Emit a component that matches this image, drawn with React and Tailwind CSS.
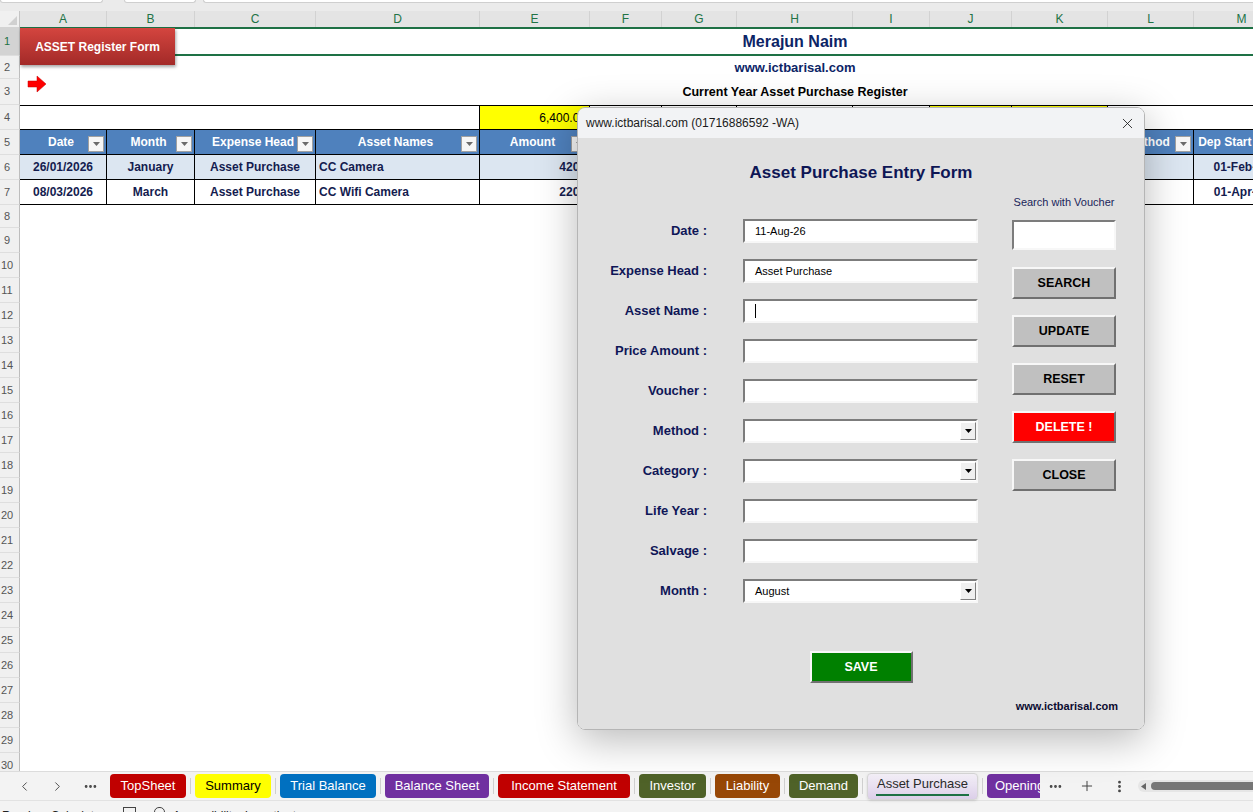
import { X, ChevronLeft, ChevronRight, Plus, Ellipsis, EllipsisVertical } from 'lucide-react';

const cols = [
    { k: 'A', w: 'w-[87px]' },
    { k: 'B', w: 'w-[88px]' },
    { k: 'C', w: 'w-[121px]' },
    { k: 'D', w: 'w-[164px]' },
    { k: 'E', w: 'w-[110px]' },
    { k: 'F', w: 'w-[72px]' },
    { k: 'G', w: 'w-[75px]' },
    { k: 'H', w: 'w-[116px]' },
    { k: 'I', w: 'w-[77px]' },
    { k: 'J', w: 'w-[82px]' },
    { k: 'K', w: 'w-[96px]' },
    { k: 'L', w: 'w-[86px]' },
    { k: 'M', w: 'w-[96px]' },
];

const headers = ['Date', 'Month', 'Expense Head', 'Asset Names', 'Amount', 'Voucher', 'Category', 'Life Year', 'Salvage', 'Dep/Year', 'Dep/Month', 'Method', 'Dep Start Date'];

const data = [
    { bg: 'bg-[#dce6f1]', cells: ['26/01/2026', 'January', 'Asset Purchase', 'CC Camera', '4200', '', '', '', '', '', '', '', '01-Feb-26'] },
    { bg: 'bg-white', cells: ['08/03/2026', 'March', 'Asset Purchase', 'CC Wifi Camera', '2200', '', '', '', '', '', '', '', '01-Apr-26'] },
];

const tabs = [
    { name: 'TopSheet', w: 'w-[76px]', cls: 'bg-[#c00000] text-white' },
    { name: 'Summary', w: 'w-[76px]', cls: 'bg-[#ffff00] text-black' },
    { name: 'Trial Balance', w: 'w-[96px]', cls: 'bg-[#0070c0] text-white' },
    { name: 'Balance Sheet', w: 'w-[104px]', cls: 'bg-[#7030a0] text-white' },
    { name: 'Income Statement', w: 'w-[132px]', cls: 'bg-[#c00000] text-white' },
    { name: 'Investor', w: 'w-[67px]', cls: 'bg-[#4f6228] text-white' },
    { name: 'Liability', w: 'w-[65px]', cls: 'bg-[#974706] text-white' },
    { name: 'Demand', w: 'w-[69px]', cls: 'bg-[#4f6228] text-white' },
];

const fields = [
    { label: 'Date :', value: '11-Aug-26' },
    { label: 'Expense Head :', value: 'Asset Purchase' },
    { label: 'Asset Name :', caret: true },
    { label: 'Price Amount :' },
    { label: 'Voucher :' },
    { label: 'Method :', combo: true },
    { label: 'Category :', combo: true },
    { label: 'Life Year :' },
    { label: 'Salvage :' },
    { label: 'Month :', combo: true, value: 'August' },
];

const sunken = 'border-2 border-t-[#7c7c7c] border-l-[#7c7c7c] border-b-[#f7f7f7] border-r-[#f7f7f7]';
const raised = 'border-2 border-t-[#f7f7f7] border-l-[#f7f7f7] border-b-[#707070] border-r-[#707070]';

const FilterBtn = () => (
    <span className="absolute right-[2px] bottom-[2px] flex h-[16px] w-[16px] items-center justify-center border border-[#a0a0a0] bg-[#f6f6f6]">
        <svg width="7" height="4" viewBox="0 0 7 4"><path d="M0 0h7L3.5 4z" fill="#6b6b6b" /></svg>
    </span>
);

const RowHead = ({ n, sel }) => (
    <div className={`flex w-[20px] shrink-0 items-center justify-center border-r border-b border-r-[#bdbdbd] border-b-[#dedede] pr-[5px] text-[11px] ${sel ? 'bg-[#d3d3d3] text-[#1e7145]' : 'bg-[#f0f0f0] text-[#555]'}`}>
        {n}
    </div>
);

const Button = ({ children, cls = 'bg-[#c0c0c0] text-black' }) => (
    <div className={`flex h-[32px] w-[104px] items-center justify-center text-[12.5px] font-bold ${raised} ${cls}`}>{children}</div>
);

const App = () => {
    const blank = Array.from({ length: 22 }, (_, i) => i + 9);

    return (
        <div className="relative h-[812px] w-[1253px] overflow-hidden bg-white font-['Liberation_Sans',Arial,sans-serif]">
            {/* formula bar remnant */}
            <div className="flex h-[11px] bg-[#ebebeb]">
                <div className="h-[3px] w-[103px] rounded-b-[4px] border-x border-b border-[#cfcfcf] bg-white" />
                <div className="ml-[21px] h-[3px] w-[72px] rounded-b-[4px] border-x border-b border-[#cfcfcf] bg-white" />
                <div className="ml-[7px] h-[3px] flex-1 rounded-bl-[4px] border-l border-b border-[#cfcfcf] bg-white" />
            </div>

            {/* column letters */}
            <div className="flex h-[16px] bg-[#e4e4e4]">
                <div className="relative w-[20px] shrink-0 border-r border-[#c4c4c4] bg-[#f0f0f0]">
                    <svg className="absolute right-[2px] bottom-[2px]" width="9" height="9" viewBox="0 0 9 9"><path d="M9 0v9H0z" fill="#d0d0d0" /></svg>
                </div>
                {cols.map(c => (
                    <div key={c.k} className={`${c.w} shrink-0 border-r border-[#d2d2d2] text-center text-[12px] leading-[16px] text-[#217346]`}>{c.k}</div>
                ))}
            </div>

            {/* sheet rows */}
            <div className="h-[744px] overflow-hidden text-[12px]">
                <div className="flex h-[29px]">
                    <RowHead n="1" sel />
                    <div className="flex w-[1550px] shrink-0 items-center justify-center border-y-2 border-[#1e7145] text-[16px] font-bold text-[#0c2466]">Merajun Naim</div>
                </div>
                <div className="flex h-[23px]">
                    <RowHead n="2" />
                    <div className="flex w-[1550px] shrink-0 items-center justify-center text-[13px] font-bold text-[#0c2466]">www.ictbarisal.com</div>
                </div>
                <div className="flex h-[26px]">
                    <RowHead n="3" />
                    <div className="flex w-[1550px] shrink-0 items-center justify-center text-[12.5px] font-bold text-black">Current Year Asset Purchase Register</div>
                </div>
                <div className="flex h-[25px]">
                    <RowHead n="4" />
                    <div className="flex flex-1 border-y border-black">
                        <div className="w-[460px] shrink-0 border-r border-black" />
                        <div className="flex w-[110px] shrink-0 items-center justify-end border-r border-black bg-[#ffff00] pr-[3px] text-black">6,400.00</div>
                        <div className="w-[72px] shrink-0 border-r border-black" />
                        <div className="w-[75px] shrink-0 border-r border-black" />
                        <div className="w-[116px] shrink-0 border-r border-black" />
                        <div className="w-[77px] shrink-0 border-r border-black" />
                        <div className="w-[82px] shrink-0 border-r border-black bg-[#ffff00]" />
                        <div className="w-[96px] shrink-0 border-r border-black bg-[#ffff00]" />
                        <div className="flex-1" />
                    </div>
                </div>
                <div className="flex h-[25px]">
                    <RowHead n="5" />
                    {cols.map((c, i) => (
                        <div key={c.k} className={`relative ${c.w} flex shrink-0 items-center justify-center border-r border-b border-black bg-[#4f81bd] pr-[4px] font-bold text-white`}>
                            <span className="whitespace-nowrap">{headers[i]}</span>
                            <FilterBtn />
                        </div>
                    ))}
                </div>
                {data.map((r, ri) => (
                    <div key={ri} className="flex h-[25px]">
                        <RowHead n={String(6 + ri)} />
                        {cols.map((c, i) => (
                            <div
                                key={c.k}
                                className={`${c.w} flex shrink-0 items-center whitespace-nowrap border-r border-b border-black px-[3px] font-bold text-[#141c4f] ${r.bg} ${i === 3 ? 'justify-start' : i === 4 ? 'justify-end' : 'justify-center'}`}
                            >
                                {r.cells[i]}
                            </div>
                        ))}
                    </div>
                ))}
                <div className="flex h-[23px]">
                    <RowHead n="8" />
                </div>
                {blank.map(n => (
                    <div key={n} className="flex h-[25px]">
                        <RowHead n={String(n)} />
                    </div>
                ))}
            </div>

            {/* sheet tabs */}
            <div className="flex h-[29px] items-center border-t border-[#dcdcdc] bg-[#f3f3f3] text-[13px]">
                <div className="flex w-[110px] shrink-0 items-center pl-[8px] text-[#444]">
                    <span className="flex w-[33px] justify-center"><ChevronLeft size={15} strokeWidth={1.5} /></span>
                    <span className="flex w-[33px] justify-center"><ChevronRight size={15} strokeWidth={1.5} /></span>
                    <span className="flex w-[33px] justify-center"><Ellipsis size={15} strokeWidth={2.5} /></span>
                </div>
                {tabs.map(t => (
                    <div key={t.name} className="flex items-center">
                        <div className={`${t.w} flex h-[24px] items-center justify-center rounded-[4px] ${t.cls}`}>{t.name}</div>
                        <div className="mx-[4px] h-[16px] w-[1px] bg-[#cfcfcf]" />
                    </div>
                ))}
                <div className="relative flex h-[27px] w-[111px] flex-col items-center justify-center rounded-[4px] border border-[#d6d6d6] bg-gradient-to-b from-[#f4f0f8] to-[#dccfe9] text-[#2a2a2a] shadow-sm">
                    <span className="leading-[16px]">Asset Purchase</span>
                    <span className="mt-[2px] h-[2px] w-[93px] bg-[#1e7145]" />
                </div>
                <div className="mx-[4px] h-[16px] w-[1px] bg-[#cfcfcf]" />
                <div className="flex h-[24px] w-[53px] items-center overflow-hidden whitespace-nowrap rounded-l-[4px] bg-[#7030a0] pl-[8px] text-white">Opening Balance</div>
                <span className="flex w-[30px] justify-center text-[#444]"><Ellipsis size={15} strokeWidth={2.5} /></span>
                <span className="flex w-[34px] justify-center text-[#444]"><Plus size={16} strokeWidth={1.5} /></span>
                <span className="flex w-[30px] justify-center text-[#444]"><EllipsisVertical size={15} strokeWidth={2.5} /></span>
                <div className="ml-[4px] flex h-[12px] flex-1 items-center rounded-l-full bg-[#e6e6e6] pl-[3px]">
                    <svg width="5" height="7" viewBox="0 0 5 7"><path d="M5 0v7L0 3.5z" fill="#666" /></svg>
                    <div className="ml-[5px] h-[8px] flex-1 rounded-l-full bg-[#767676]" />
                </div>
            </div>

            {/* status bar */}
            <div className="flex h-[24px] items-start border-t border-[#e2e2e2] bg-[#f3f3f3] pt-[6px] text-[12px] text-[#222]">
                <span className="ml-[2px]">Ready</span>
                <span className="ml-[14px]">Calculate</span>
                <span className="ml-[22px] h-[10px] w-[13px] border border-[#444]" />
                <span className="ml-[18px] h-[10px] w-[11px] rounded-full border border-[#444]" />
                <span className="ml-[8px]">Accessibility: Investigate</span>
            </div>

            {/* shapes over the sheet */}
            <div className="absolute left-[20px] top-[28px] flex h-[37px] w-[155px] items-center justify-center bg-gradient-to-b from-[#d4453f] to-[#a32a28] text-[12px] font-bold text-white shadow-[1px_2px_3px_rgba(0,0,0,0.35)]">
                ASSET Register Form
            </div>
            <svg className="absolute left-[27px] top-[75px]" width="20" height="18" viewBox="0 0 20 18">
                <path d="M1 6h9V1l9 8-9 8v-5H1z" fill="#ff0000" stroke="#c00000" strokeWidth="0.5" />
            </svg>

            {/* user form dialog */}
            <div className="absolute left-[577px] top-[107px] flex h-[623px] w-[568px] flex-col overflow-hidden rounded-[8px] border border-[#b5b5b5] shadow-[0_10px_40px_rgba(0,0,0,0.28)]">
                <div className="flex h-[30px] shrink-0 items-center bg-[#f2f3f5] pl-[8px] pr-[8px] text-[12px] text-[#1b1b1b]">
                    <span>www.ictbarisal.com (01716886592 -WA)</span>
                    <X className="ml-auto" size={17} strokeWidth={1.2} />
                </div>
                <div className="flex flex-1 flex-col bg-[#e0e0e0]">
                    <div className="pt-[24px] text-center text-[17px] font-bold leading-[22px] text-[#0e1655]">Asset Purchase Entry Form</div>
                    <div className="mt-[9px] flex">
                        <div className="w-[400px] pt-[18px]">
                            {fields.map(f => (
                                <div key={f.label} className="flex h-[40px] items-center">
                                    <div className="w-[129px] text-right text-[13px] font-bold text-[#0f1657]">{f.label}</div>
                                    <div className={`ml-[36px] flex h-[24px] w-[235px] items-center bg-white pl-[10px] text-[11px] text-black ${sunken}`}>
                                        {f.value && <span>{f.value}</span>}
                                        {f.caret && <span className="h-[14px] w-[1px] bg-black" />}
                                        {f.combo && (
                                            <span className="ml-auto flex h-[18px] w-[16px] items-center justify-center border border-t-white border-l-white border-b-[#808080] border-r-[#808080] bg-[#f0f0f0]">
                                                <svg width="7" height="4" viewBox="0 0 7 4"><path d="M0 0h7L3.5 4z" fill="#000" /></svg>
                                            </span>
                                        )}
                                    </div>
                                </div>
                            ))}
                        </div>
                        <div className="ml-[34px] flex w-[104px] flex-col">
                            <div className="h-[18px] whitespace-nowrap text-center text-[11px] leading-[18px] text-[#1a1f5a]">Search with Voucher</div>
                            <div className={`mt-[9px] h-[30px] w-[104px] bg-white ${sunken}`} />
                            <div className="mt-[17px]"><Button>SEARCH</Button></div>
                            <div className="mt-[16px]"><Button>UPDATE</Button></div>
                            <div className="mt-[16px]"><Button>RESET</Button></div>
                            <div className="mt-[16px]"><Button cls="bg-[#ff0000] text-white">DELETE !</Button></div>
                            <div className="mt-[16px]"><Button>CLOSE</Button></div>
                        </div>
                    </div>
                    <div className={`mx-auto mt-[40px] flex h-[32px] w-[103px] items-center justify-center bg-[#008000] text-[12.5px] font-bold text-white ${raised}`}>SAVE</div>
                    <div className="mt-[16px] pr-[26px] text-right text-[11px] font-bold leading-[14px] text-[#0b0b30]">www.ictbarisal.com</div>
                </div>
            </div>
        </div>
    );
};

export default App;
